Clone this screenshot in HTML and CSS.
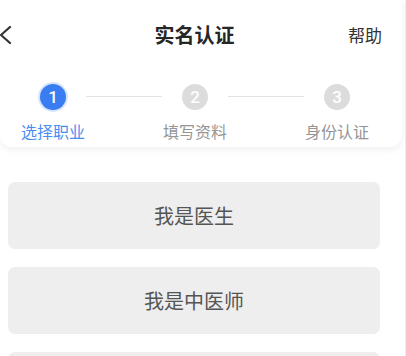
FILE: index.html
```html
<!DOCTYPE html>
<html>
<head>
  <meta charset="utf-8">
  <meta name="viewport" content="width=device-width, initial-scale=1">
  <title>实名认证</title>
  <link rel="stylesheet" href="styles.css">
</head>
<body>
  <div class="top-card">
    <div class="header">
      <button class="back-btn">
        <svg width="14" height="20" viewBox="0 0 14 20">
          <path d="M11 2 L2 10 L11 18" fill="none" stroke="#333" stroke-width="2.2" stroke-linecap="round" stroke-linejoin="round"/>
        </svg>
      </button>
      <h1>实名认证</h1>
      <a class="help-link">帮助</a>
    </div>

    <div class="steps">
      <div class="step active">
        <div class="step-num">1</div>
        <div class="step-label">选择职业</div>
      </div>
      <div class="step-line"></div>
      <div class="step">
        <div class="step-num">2</div>
        <div class="step-label">填写资料</div>
      </div>
      <div class="step-line"></div>
      <div class="step">
        <div class="step-num">3</div>
        <div class="step-label">身份认证</div>
      </div>
    </div>
  </div>

  <div class="job-list">
    <button class="job-btn">我是医生</button>
    <button class="job-btn">我是中医师</button>
    <button class="job-btn"></button>
  </div>
</body>
</html>
```

FILE: styles.css
```css
body {
  font-family: "Noto Sans CJK SC", "Noto Sans", sans-serif;
  margin: 0;
  background: #fff;
  color: #222;
  overflow: hidden;
  border-right: 1px solid #ececec;
}

.top-card {
  background: #fff;
  margin-right: 3px;
  border-radius: 0 0 12px 12px;
  box-shadow: 0 2px 8px rgba(0, 0, 0, 0.07);
  padding-bottom: 5px;
}

.header {
  height: 68px;
  width: 389px;
  display: grid;
  grid-template-columns: 1fr auto 1fr;
  align-items: center;
}

.back-btn {
  justify-self: start;
  background: none;
  border: none;
  padding: 0;
  display: flex;
  margin-left: -1px;
  margin-top: 1px;
}

.header h1 {
  margin: 0;
  font-size: 20px;
  font-weight: 700;
  color: #262626;
}

.help-link {
  justify-self: end;
  padding-right: 7px;
  font-size: 17px;
  color: #333;
}

.steps {
  display: flex;
  padding: 16px 0 0 21px;
}

.step {
  width: 64px;
  display: flex;
  flex-direction: column;
  align-items: center;
}

.step-num {
  width: 26px;
  height: 26px;
  border-radius: 50%;
  background: #dcdcdc;
  color: #fff;
  font-family: Roboto, sans-serif;
  font-weight: 500;
  font-size: 17px;
  display: flex;
  align-items: center;
  justify-content: center;
}

.step.active .step-num {
  background: #3a7cf2;
  box-shadow: 0 0 0 2px #d6e5fc;
}

.step-label {
  margin-top: 10px;
  font-size: 16px;
  line-height: 22px;
  color: #959595;
}

.step.active .step-label {
  color: #4a8ef0;
}

.step-line {
  width: 76px;
  height: 1px;
  margin: 12px 1px 0;
  background: #e2e2e2;
}

.job-list {
  padding: 35px 25px 0 8px;
  display: flex;
  flex-direction: column;
  gap: 18px;
}

.job-btn {
  height: 67px;
  border: none;
  border-radius: 7px;
  background: #eeeeee;
  font-family: inherit;
  font-size: 20px;
  color: #555;
}
```
